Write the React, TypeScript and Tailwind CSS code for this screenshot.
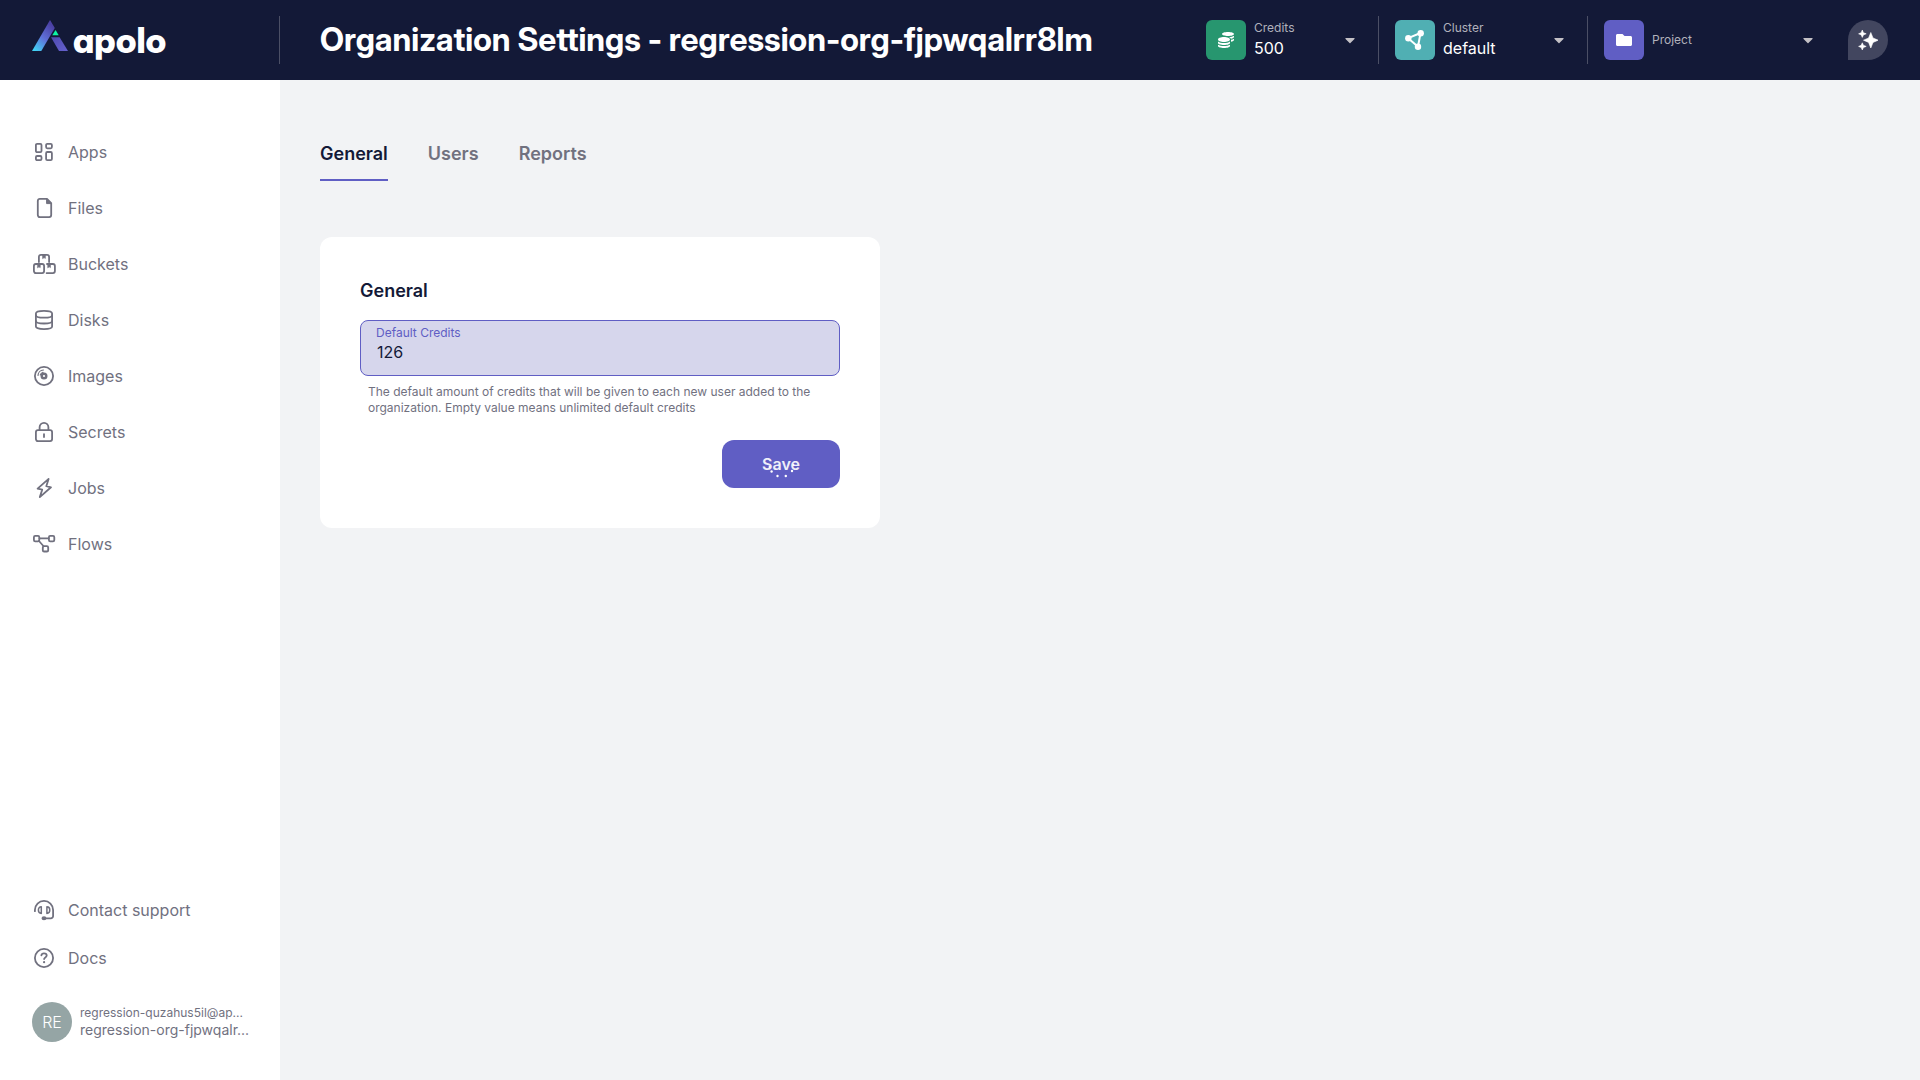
import type { ReactNode } from "react";
import { FaCaretDown, FaCoins, FaFolder } from "react-icons/fa";

function Glyph({ children }: { children: ReactNode }) {
  return (
    <svg
      viewBox="0 0 24 24"
      className="size-6 shrink-0"
      fill="none"
      stroke="currentColor"
      strokeWidth="1.8"
      strokeLinecap="round"
      strokeLinejoin="round"
      aria-hidden="true"
    >
      {children}
    </svg>
  );
}

const mainLinks: { label: string; icon: ReactNode }[] = [
  {
    label: "Apps",
    icon: (
      <>
        <rect x="3.9" y="3.9" width="5.6" height="8.3" rx="1.2" />
        <rect x="14.1" y="3.9" width="5.8" height="4.4" rx="1.2" />
        <rect x="3.9" y="16" width="5.6" height="4.2" rx="1.2" />
        <rect x="14.1" y="12" width="5.8" height="8.2" rx="1.2" />
      </>
    ),
  },
  {
    label: "Files",
    icon: (
      <>
        <path d="M7.8 2.9H15l4.2 4.2v12a2 2 0 0 1-2 2H7.8a2 2 0 0 1-2-2V4.9a2 2 0 0 1 2-2Z" />
        <path d="M14.6 3v4.6h4.6Z" fill="currentColor" strokeWidth="1" />
      </>
    ),
  },
  {
    label: "Buckets",
    icon: (
      <>
        <path d="M6.9 10V4.9a2 2 0 0 1 2-2h6.2a2 2 0 0 1 2 2V10" />
        <rect x="1.9" y="12" width="10.2" height="9.1" rx="2" />
        <path d="M15 12h5.9a2 2 0 0 1 2 2v5.1a2 2 0 0 1-2 2h-6.3" />
        <path d="M10.9 3h2.4v3.4l-1.2-.8-1.2.8ZM5.8 12.2h2.4v3.4L7 14.8l-1.2.8ZM16 12.2h2.4v3.4l-1.2-.8-1.2.8Z" fill="currentColor" strokeWidth=".7" />
      </>
    ),
  },
  {
    label: "Disks",
    icon: (
      <>
        <path d="M3.9 5.4c0-1.5 3.6-2.5 8.1-2.5s8.1 1 8.1 2.5v13.2c0 1.500-3.600 2.500-8.100 2.500s-8.100-1-8.100-2.500Z" />
        <path d="M3.9 7.2c0 1.600 3.600 2.500 8.100 2.500s8.100-.9 8.100-2.500M3.900 13c0 1.600 3.600 2.500 8.100 2.500s8.100-.9 8.100-2.500" />
      </>
    ),
  },
  {
    label: "Images",
    icon: (
      <>
        <circle cx="12" cy="12" r="9.1" />
        <circle cx="12" cy="12" r="2.3" strokeWidth="2.4" />
        <path d="M6 11.4A5.8 5.8 0 0 1 11.4 6M8.3 11A4 4 0 0 1 11 8.3" strokeWidth="1.2" />
      </>
    ),
  },
  {
    label: "Secrets",
    icon: (
      <>
        <rect x="3.9" y="10.2" width="16.2" height="10.9" rx="2" />
        <path d="M7.6 10V7.2a4.4 4.4 0 0 1 8.8 0V10M12 14.1v3" />
      </>
    ),
  },
  {
    label: "Jobs",
    icon: <path d="M16.6 2.9 5.6 12.6l4.6 1.1-2.4 7.4 11.2-9.8-4.7-1.1Z" />,
  },
  {
    label: "Flows",
    icon: (
      <>
        <rect x="1.9" y="3.9" width="5.4" height="5.4" rx="1.3" />
        <rect x="16.9" y="3.9" width="5.4" height="5.4" rx="1.3" />
        <rect x="10.8" y="14.1" width="5.4" height="5.4" rx="1.3" />
        <path d="M7.5 6.4h9.2M7 9l4.4 5" />
      </>
    ),
  },
];

const footerLinks: { label: string; icon: ReactNode }[] = [
  {
    label: "Contact support",
    icon: (
      <>
        <path d="M2.9 13.2V12a9.1 9.1 0 0 1 18.2 0v6a2.3 2.3 0 0 1-2.3 2.3h-6" />
        <path d="M9.3 8.800c-1.900 0-2.900 1.300-2.900 3.300s1 3.300 2.900 3.300ZM14.900 8.800c1.900 0 2.900 1.300 2.900 3.300s-1 3.300-2.900 3.300Z" strokeWidth="1.500" />
        <ellipse cx="12" cy="20.3" rx="1.6" ry="1.1" fill="currentColor" />
      </>
    ),
  },
  {
    label: "Docs",
    icon: (
      <>
        <circle cx="12" cy="12" r="9.1" />
        <path d="M9.4 9.4c.2-1.3 1.2-2 2.6-2 1.5 0 2.7.9 2.7 2.2 0 1.7-2.6 1.9-2.6 3.4" />
        <circle cx="12.1" cy="16.2" r=".5" fill="currentColor" strokeWidth="1.2" />
      </>
    ),
  },
];

function Logo() {
  return (
    <a href="#home" className="flex items-center gap-[5px] text-white">
      <svg viewBox="0 0 36 40" className="h-10 w-9 shrink-0" aria-hidden="true">
        <defs>
          <linearGradient id="logo-left" x1="0.15" y1="1" x2="0.75" y2="0.1">
            <stop offset="0" stopColor="#41d3f5" />
            <stop offset="0.5" stopColor="#5f70d8" />
            <stop offset="1" stopColor="#4b41a5" />
          </linearGradient>
          <linearGradient id="logo-right" x1="0" y1="0" x2="1" y2="1">
            <stop offset="0" stopColor="#4f4ab0" />
            <stop offset="1" stopColor="#6561cd" />
          </linearGradient>
        </defs>
        <path d="M18 0 22.8 8.1 9.3 31H0Z" fill="url(#logo-left)" />
        <path d="M23.6 10 26.7 15.2H20.3Z" fill="#0df5a4" />
        <path d="M19 17.2H27.6L36 31H27Z" fill="url(#logo-right)" />
      </svg>
      <span className="font-['Inter_Display',Inter,sans-serif] text-[35px] leading-10 font-extrabold [font-feature-settings:'cv11']">
        apolo
      </span>
    </a>
  );
}

function Picker({
  label,
  value,
  tile,
  icon,
  width,
}: {
  label: string;
  value?: string;
  tile: string;
  icon: ReactNode;
  width: string;
}) {
  return (
    <button type="button" className={`flex h-12 items-center gap-2 pr-1 text-left ${width}`}>
      <span className={`flex size-10 shrink-0 items-center justify-center rounded-md text-white ${tile}`}>{icon}</span>
      <span className="flex flex-1 flex-col">
        <span className="text-xs leading-4 text-[#b1b1bb]">{label}</span>
        {value && <span className="text-base leading-6 text-white">{value}</span>}
      </span>
      <FaCaretDown className="size-4 text-[#c4c1c6]" aria-hidden="true" />
    </button>
  );
}

function Header() {
  return (
    <header className="flex h-20 shrink-0 items-center bg-[#131937] pr-8">
      <div className="flex h-12 w-[280px] shrink-0 items-center border-r border-[#4b4f65] pl-8">
        <Logo />
      </div>
      <h1 className="flex-1 truncate pl-10 font-['Inter_Display',Inter,sans-serif] text-[32px] leading-12 font-bold text-white">
        Organization Settings - regression-org-fjpwqalrr8lm
      </h1>
      <Picker label="Credits" value="500" tile="bg-[#27966f]" width="w-[156px]" icon={<FaCoins className="size-4" />} />
      <div className="mx-4 h-12 w-px bg-[#4b4f65]" />
      <Picker
        label="Cluster"
        value="default"
        tile="bg-[#50afb3]"
        width="w-44"
        icon={
          <svg viewBox="0 0 20 20" className="size-5" fill="currentColor" stroke="currentColor" aria-hidden="true">
            <path d="M3.2 8.2 15.5 3 13 16.8Z" fill="none" strokeWidth="2" strokeLinejoin="round" />
            <circle cx="3.3" cy="8.2" r="3.2" stroke="none" />
            <circle cx="15.7" cy="3.2" r="3.2" stroke="none" />
            <circle cx="13" cy="16.8" r="3.2" stroke="none" />
          </svg>
        }
      />
      <div className="mx-4 h-12 w-px bg-[#4b4f65]" />
      <Picker label="Project" tile="bg-[#605ec4]" width="w-[216px]" icon={<FaFolder className="size-4" />} />
      <button
        type="button"
        aria-label="Assistant"
        className="ml-7 flex size-10 items-center justify-center rounded-full rounded-bl-none bg-[#42465f] text-white"
      >
        <svg viewBox="0 0 20 20" className="size-5" fill="currentColor" stroke="currentColor" strokeWidth=".6" strokeLinejoin="round" aria-hidden="true">
          <path d="M12.8 2.5 15 8 20.3 10.2 15 12.4 12.8 18 10.6 12.4 5.5 10.2 10.6 8Z" />
          <path d="M4.3 0 5.4 2.7 8.2 3.8 5.4 4.9 4.3 7.4 3.2 4.9.6 3.8 3.2 2.7Z" />
          <path d="M4.3 12.8 5.4 15.3 8.2 16.4 5.4 17.5 4.3 20 3.2 17.5.6 16.4 3.2 15.3Z" />
        </svg>
      </button>
    </header>
  );
}

function Sidebar() {
  return (
    <aside className="flex w-[280px] shrink-0 flex-col justify-between bg-white px-8 pt-11 pb-[30px] text-[#71717f]">
      <nav aria-label="Main" className="flex flex-col">
        {mainLinks.map((link) => (
          <a key={link.label} href="#section" className="flex h-14 items-center gap-3 text-base">
            <Glyph>{link.icon}</Glyph>
            {link.label}
          </a>
        ))}
      </nav>
      <div className="flex flex-col">
        {footerLinks.map((link) => (
          <a key={link.label} href="#help" className="flex h-12 items-center gap-3 text-base">
            <Glyph>{link.icon}</Glyph>
            {link.label}
          </a>
        ))}
        <button type="button" className="mt-3 flex h-14 items-center gap-2 text-left">
          <span className="flex size-10 shrink-0 items-center justify-center rounded-full bg-[#95a5a5] text-base leading-6 font-light text-white">
            RE
          </span>
          <span className="flex flex-col whitespace-nowrap">
            <span className="text-xs leading-4">regression-quzahus5il@ap...</span>
            <span className="text-sm leading-[18px]">regression-org-fjpwqalr...</span>
          </span>
        </button>
      </div>
    </aside>
  );
}

function Tabs() {
  return (
    <nav aria-label="Settings" className="flex gap-10 text-lg leading-[27px] font-semibold text-[#71717f]">
      <a href="#general" aria-current="page" className="border-b-2 border-[#605ec4] pb-3 text-[#131937]">
        General
      </a>
      <a href="#users" className="border-b-2 border-transparent pb-3">
        Users
      </a>
      <a href="#reports" className="border-b-2 border-transparent pb-3">
        Reports
      </a>
    </nav>
  );
}

function Spinner() {
  return (
    <svg viewBox="0 0 32 32" className="absolute size-8" fill="#ffffff" aria-hidden="true">
      <circle cx="4.5" cy="19" r="1" />
      <circle cx="6.6" cy="23.5" r="1.2" />
      <circle cx="12.5" cy="28" r="1.2" />
      <circle cx="20.8" cy="28" r="1.2" />
      <circle cx="27" cy="23" r="1.2" />
      <circle cx="28.5" cy="17" r="1" />
    </svg>
  );
}

function GeneralCard() {
  return (
    <section className="mt-14 w-full max-w-[560px] rounded-xl bg-white p-10">
      <h2 className="text-lg leading-[27px] font-semibold text-[#131937]">General</h2>
      <form className="flex flex-col">
        <div className="mt-4 flex h-14 flex-col rounded-lg border border-[#605ec4] bg-[#d6d6ec] px-[15px] pt-1">
          <label htmlFor="default-credits" className="text-xs leading-4 text-[#605ec4]">
            Default Credits
          </label>
          <input
            id="default-credits"
            type="text"
            inputMode="numeric"
            defaultValue="126"
            aria-describedby="default-credits-hint"
            className="h-[22px] w-full bg-transparent pl-px text-base leading-[22px] text-[#131937] outline-none"
          />
        </div>
        <p id="default-credits-hint" className="mt-2 px-2 text-xs leading-4 text-[#71717f]">
          The default amount of credits that will be given to each new user added to the organization. Empty value means
          unlimited default credits
        </p>
        <button
          type="submit"
          className="relative mt-6 flex h-12 items-center justify-center self-end rounded-xl bg-[#605ec4] px-10 text-base font-semibold text-white"
        >
          <span className="opacity-90">Save</span>
          <Spinner />
        </button>
      </form>
    </section>
  );
}

export default function App() {
  return (
    <div className="flex min-h-screen flex-col bg-[#f2f3f5] font-[Inter,sans-serif]">
      <Header />
      <div className="flex flex-1">
        <Sidebar />
        <main className="flex-1 px-10 pt-[60px]">
          <Tabs />
          <GeneralCard />
        </main>
      </div>
    </div>
  );
}
